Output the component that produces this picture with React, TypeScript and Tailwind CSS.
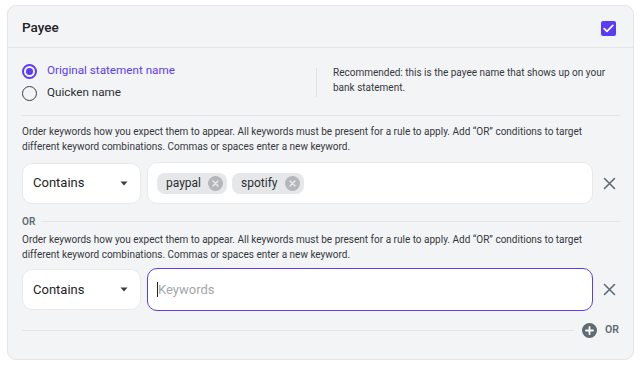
import React from "react";

const font = { fontFamily: "Roboto, 'Noto Sans', sans-serif" };

function Caret() {
  return (
    <svg width="8" height="5" viewBox="0 0 8 5" className="text-[#3a3f44]">
      <path d="M0.5 0.5 L7.5 0.5 L4 4.5 Z" fill="currentColor" />
    </svg>
  );
}

function CloseX() {
  return (
    <svg width="13" height="13" viewBox="0 0 13 13" className="text-[#5f6b73]">
      <path d="M1.5 1.5 L11.5 11.5 M11.5 1.5 L1.5 11.5" stroke="currentColor" strokeWidth="1.6" strokeLinecap="round" />
    </svg>
  );
}

function ChipRemove() {
  return (
    <svg width="15" height="15" viewBox="0 0 15 15">
      <circle cx="7.5" cy="7.5" r="7.5" fill="#b3b6ba" />
      <path d="M5 5 L10 10 M10 5 L5 10" stroke="#e6e7e9" strokeWidth="1.6" strokeLinecap="round" />
    </svg>
  );
}

function Chip({ label }: { label: string }) {
  return (
    <div className="flex items-center h-[21px] rounded-[8px] bg-[#e6e7e9] pl-[9px] pr-[4px] gap-[7px] text-[12px] text-[#2b2f33]">
      <span>{label}</span>
      <ChipRemove />
    </div>
  );
}

function Select() {
  return (
    <div className="w-[119px] h-[41px] shrink-0 rounded-[10px] bg-white border border-[#e8e9eb] flex items-center justify-between pl-[10px] pr-[12px] text-[13px] text-[#1f2326]">
      <span>Contains</span>
      <Caret />
    </div>
  );
}

function Help() {
  return (
    <p className="text-[10px] leading-[15px] text-[#33383c]">
      Order keywords how you expect them to appear. All keywords must be present for a rule to apply. Add “OR” conditions to target
      <br />
      different keyword combinations. Commas or spaces enter a new keyword.
    </p>
  );
}

export default function App() {
  return (
    <div className="bg-white w-[643px] h-[365px] pl-[7px] pt-[5px]" style={font}>
      <div className="w-[627px] h-[355px] rounded-[9px] border border-[#e3e5e8] bg-[#f3f4f6] flex flex-col">
        <div className="h-[42px] flex items-center justify-between pl-[14px] pr-[17px] border-b border-[#e3e5e8]">
          <span className="text-[13.5px] font-medium text-[#1f2326] pt-[2px]">Payee</span>
          <div className="w-[15px] h-[15px] mt-[3px] rounded-[2px] bg-[#5b3cf4] flex items-center justify-center">
            <svg width="11" height="9" viewBox="0 0 11 9">
              <path d="M1.2 4.6 L4 7.3 L9.8 1.4" stroke="white" strokeWidth="1.7" fill="none" strokeLinecap="round" strokeLinejoin="round" />
            </svg>
          </div>
        </div>
        <div className="pl-[14px] pr-[13px] flex flex-col">
          <div className="flex pt-[12px] pb-[11px] border-b border-[#e3e5e8]">
            <div className="w-[294px] flex flex-col">
              <div className="flex items-center h-[22px] gap-[10px]">
                <div className="w-[15px] h-[15px] rounded-full border-[2px] border-[#5b3cf4] flex items-center justify-center">
                  <div className="w-[7px] h-[7px] rounded-full bg-[#5b3cf4]" />
                </div>
                <span className="text-[11.7px] text-[#5b3cf4]">Original statement name</span>
              </div>
              <div className="flex items-center h-[22px] gap-[10px]">
                <div className="w-[15px] h-[15px] rounded-full border-[1.5px] border-[#3a3f44]" />
                <span className="text-[11.7px] text-[#2b2f33]">Quicken name</span>
              </div>
            </div>
            <div className="self-center h-[29px] w-px bg-[#e0e2e5]" />
            <p className="pl-[16px] pt-[5px] text-[10px] leading-[15px] text-[#33383c]">
              Recommended: this is the payee name that shows up on your
              <br />
              bank statement.
            </p>
          </div>
          <div className="pt-[8px]">
            <Help />
          </div>
          <div className="flex items-center mt-[8px] gap-[6px]">
            <Select />
            <div className="flex-1 h-[42px] rounded-[10px] bg-white border border-[#e8e9eb] flex items-center pl-[9px] gap-[5px]">
              <Chip label="paypal" />
              <Chip label="spotify" />
            </div>
            <div className="w-[21px] flex justify-center">
              <CloseX />
            </div>
          </div>
          <div className="flex items-center mt-[10px] h-[14px] gap-[6px]">
            <span className="text-[10px] font-semibold text-[#5f6b73]">OR</span>
            <div className="flex-1 h-px bg-[#e3e5e8]" />
          </div>
          <div className="pt-[4px]">
            <Help />
          </div>
          <div className="flex items-center mt-[6px] gap-[6px]">
            <Select />
            <div className="flex-1 h-[43px] rounded-[10px] bg-white border-[1.5px] border-[#5b3cf4] flex items-center pl-[9px]">
              <span className="w-px h-[15px] bg-[#1f2326]" />
              <span className="text-[13px] text-[#a3a7ab]">Keywords</span>
            </div>
            <div className="w-[21px] flex justify-center">
              <CloseX />
            </div>
          </div>
          <div className="flex items-center mt-[11px] h-[16px] gap-[8px]">
            <div className="flex-1 h-px bg-[#e3e5e8]" />
            <svg width="15" height="15" viewBox="0 0 15 15">
              <circle cx="7.5" cy="7.5" r="7.5" fill="#5f6b73" />
              <path d="M7.5 4 V11 M4 7.5 H11" stroke="white" strokeWidth="1.8" strokeLinecap="round" />
            </svg>
            <span className="text-[10.5px] font-semibold text-[#5f6b73] pr-[1px]">OR</span>
          </div>
        </div>
      </div>
    </div>
  );
}
